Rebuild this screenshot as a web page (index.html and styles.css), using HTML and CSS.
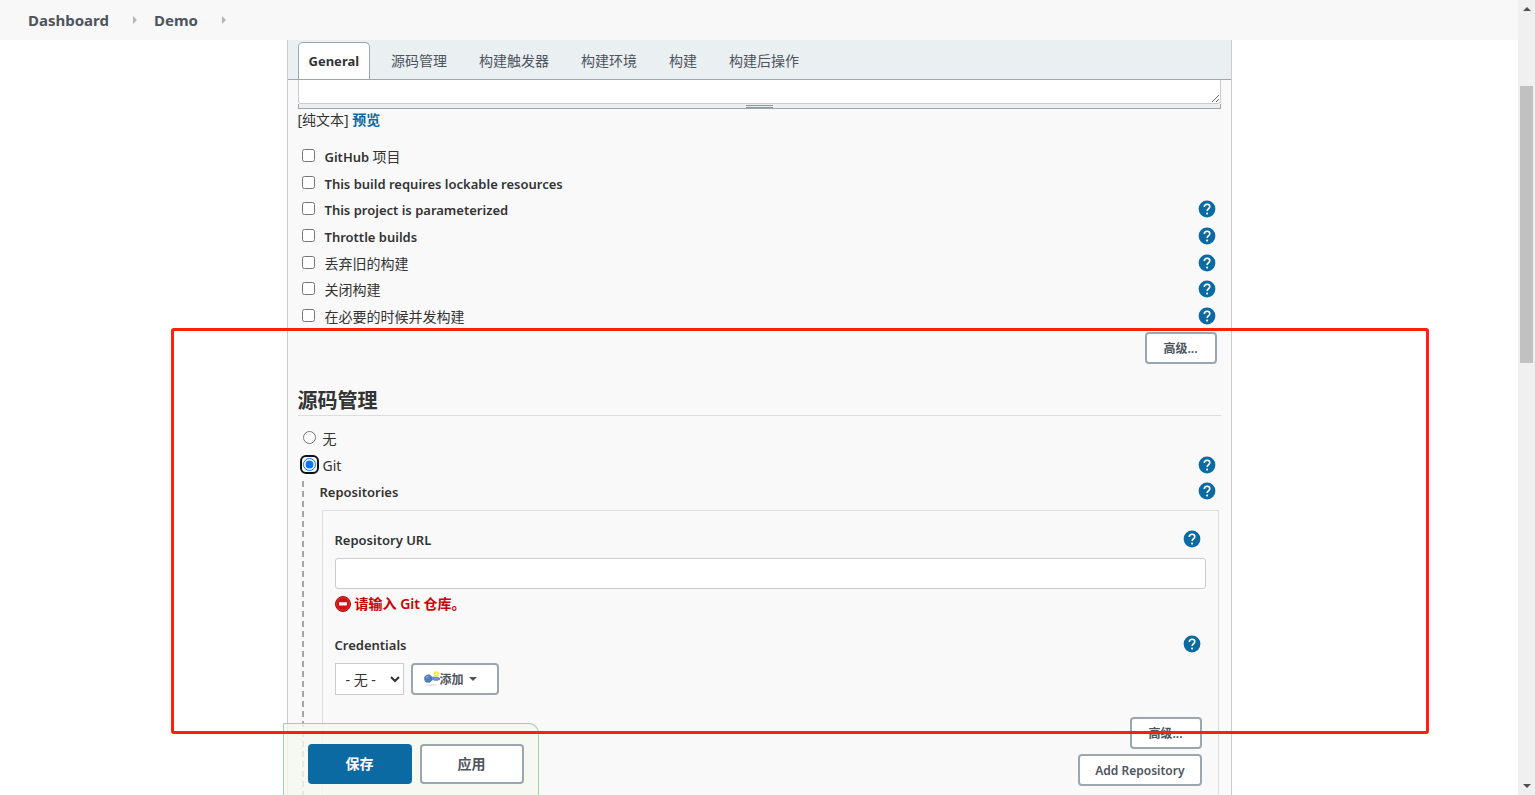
FILE: index.html
```html
<!DOCTYPE html>
<html lang="zh-CN">
    <head>
        <meta charset="utf-8">
        <title>Demo Config [Jenkins]</title>
        <link rel="stylesheet" href="styles.css">
    </head>

    <body>
        <svg class="sprite" aria-hidden="true">
            <symbol id="help" viewBox="0 0 18 18">
                <circle cx="9" cy="9" r="8.4" fill="#0b6aa2"/>
                <path d="M6.3 7C6.3 5.2 7.5 4.2 9.1 4.2s2.7 1 2.7 2.5c0 1.8-2.7 2-2.7 4.4" fill="none" stroke="#fff" stroke-width="1.6"/>
                <rect x="8.2" y="12.6" width="1.8" height="1.8" fill="#fff"/>
            </symbol>
        </svg>

        <div class="page">
            <nav class="breadcrumbs">
                <a href="#">Dashboard</a>
                <span class="arrow"></span>
                <a href="#">Demo</a>
                <span class="arrow"></span>
            </nav>

            <main class="panel">
                <div class="tabs">
                    <a class="tab active" href="#general">General</a>
                    <a class="tab" href="#scm">源码管理</a>
                    <a class="tab" href="#triggers">构建触发器</a>
                    <a class="tab" href="#env">构建环境</a>
                    <a class="tab" href="#build">构建</a>
                    <a class="tab" href="#post">构建后操作</a>
                </div>

                <form class="config">
                    <textarea class="description" aria-label="描述"></textarea>
                    <div class="handle"><span class="grip"></span></div>
                    <div class="preview">[纯文本] <a href="#">预览</a></div>

                    <div class="options">
                        <div class="row"><input type="checkbox" id="github"><label for="github">GitHub <span class="cn">项目</span></label></div>
                        <div class="row"><input type="checkbox" id="lock"><label for="lock">This build requires lockable resources</label></div>
                        <div class="row"><input type="checkbox" id="param"><label for="param">This project is parameterized</label><a class="help" href="#" aria-label="Help"><svg><use href="#help"/></svg></a></div>
                        <div class="row"><input type="checkbox" id="throttle"><label for="throttle">Throttle builds</label><a class="help" href="#" aria-label="Help"><svg><use href="#help"/></svg></a></div>
                        <div class="row"><input type="checkbox" id="discard"><label for="discard" class="cn">丢弃旧的构建</label><a class="help" href="#" aria-label="Help"><svg><use href="#help"/></svg></a></div>
                        <div class="row"><input type="checkbox" id="disable"><label for="disable" class="cn">关闭构建</label><a class="help" href="#" aria-label="Help"><svg><use href="#help"/></svg></a></div>
                        <div class="row"><input type="checkbox" id="concurrent"><label for="concurrent" class="cn">在必要的时候并发构建</label><a class="help" href="#" aria-label="Help"><svg><use href="#help"/></svg></a></div>
                    </div>
                    <div class="right"><button type="button" class="btn">高级...</button></div>

                    <h2 id="scm">源码管理</h2>
                    <div class="row"><span class="radio"><input type="radio" name="scm" id="none"></span><label for="none" class="cn">无</label></div>
                    <div class="row"><span class="radio focused"><input type="radio" name="scm" id="git" checked></span><label for="git" class="cn">Git</label><a class="help" href="#" aria-label="Help"><svg><use href="#help"/></svg></a></div>

                    <div class="nested">
                        <div class="row"><span class="name">Repositories</span><a class="help" href="#" aria-label="Help"><svg><use href="#help"/></svg></a></div>
                        <div class="repo">
                            <div class="row"><label for="url">Repository URL</label><a class="help" href="#" aria-label="Help"><svg><use href="#help"/></svg></a></div>
                            <input type="text" id="url" class="url">
                            <div class="error">
                                <svg class="error-icon" viewBox="0 0 16 16">
                                    <circle cx="8" cy="8" r="7.5" fill="#d40f0f" stroke="#9d1111"/>
                                    <circle cx="8" cy="8" r="6.5" fill="none" stroke="#e84a4a" stroke-width=".6"/>
                                    <rect x="4" y="6.2" width="8" height="3.2" rx=".4" fill="#fff"/>
                                </svg>
                                请输入 Git 仓库。
                            </div>
                            <div class="row"><label for="cred">Credentials</label><a class="help" href="#" aria-label="Help"><svg><use href="#help"/></svg></a></div>
                            <div class="credentials">
                                <select id="cred"><option>- 无 -</option></select>
                                <button type="button" class="btn add">
                                    <svg class="key" viewBox="0 0 16 16">
                                        <ellipse cx="7.5" cy="14" rx="6" ry="1" fill="#e6e6e6"/>
                                        <path d="M6 6.2h8l1.5 1v1.6H14l-1 1-1-1-1 1-1-1H6z" fill="#6b9ad2" stroke="#3d6aa5" stroke-width=".7"/>
                                        <path d="M2 4.5 5 3.6l2.5 2v4L5.5 11.5 2 11 .6 9V6z" fill="#4f7fbd" stroke="#34619b" stroke-width=".5"/>
                                        <path d="M2 6.5l2.5-1.3" stroke="#9cc0ea"/>
                                        <circle cx="12.3" cy="3" r="2" fill="#fffbc0" stroke="#f7e93c" stroke-width="1.5"/>
                                    </svg>添加<span class="caret"></span>
                                </button>
                            </div>
                            <div class="repo-buttons">
                                <button type="button" class="btn">高级...</button>
                                <button type="button" class="btn">Add Repository</button>
                            </div>
                        </div>
                    </div>
                </form>

                <div class="bottom-bar">
                    <button type="button" class="save">保存</button>
                    <button type="button" class="apply">应用</button>
                </div>
            </main>

            <div class="highlight"></div>
        </div>

        <div class="scrollbar">
            <span class="up"></span>
            <div class="track"><div class="thumb"></div></div>
            <span class="down"></span>
        </div>
    </body>
</html>
```

FILE: styles.css
```css
* {
    box-sizing: border-box;
}

body {
    margin: 0;
    display: flex;
    height: 100vh;
    overflow: hidden;
    background: #fff;
    color: #333;
    font-family: "Noto Sans", "Noto Sans CJK SC", sans-serif;
    font-size: 14px;
    line-height: 20px;
}

a {
    color: #0b6aa2;
    text-decoration: none;
}

button, input, select, textarea {
    margin: 0;
    font-family: inherit;
}

.sprite {
    position: absolute;
    width: 0;
    height: 0;
}

.page {
    position: relative;
    flex: 1;
    display: flex;
    flex-direction: column;
    overflow: hidden;
}

/* breadcrumbs */
.breadcrumbs {
    flex: none;
    display: flex;
    align-items: center;
    height: 40px;
    padding-left: 28px;
    background: #f8f8f8;
}

.breadcrumbs a {
    color: #4d545d;
    font-weight: 700;
    font-size: 15px;
}

.arrow {
    margin: 0 17px 0 24px;
    border: 4px solid transparent;
    border-left-color: #b5b5b5;
    border-right: 0;
}

/* config panel */
.panel {
    position: relative;
    flex: 1;
    width: 100%;
    max-width: 945px;
    min-height: 0;
    margin: 0 auto;
    border: solid #ccc;
    border-width: 0 1px;
    background: #f9f9f9;
}

.tabs {
    display: flex;
    align-items: flex-end;
    gap: 10px;
    height: 40px;
    padding: 0 10px;
    border-bottom: 1px solid #9aa7b0;
    background: #eaeff2;
}

.tab {
    height: 37px;
    padding: 0 10px;
    border: 1px solid transparent;
    border-bottom: 0;
    color: #4d545d;
    line-height: 36px;
}

.tab.active {
    border-color: #9aa7b0;
    border-radius: 5px 5px 0 0;
    background: #fff;
    color: #333;
    font-weight: 700;
    font-size: 13px;
}

.config {
    padding: 0 10px;
}

.description {
    display: block;
    width: 100%;
    height: 24px;
    border: 1px solid #ccc;
    border-top: 0;
    border-radius: 0 0 3px 3px;
    resize: vertical;
}

.handle {
    height: 5px;
    padding-top: 1px;
    border: 1px solid #9aa7b0;
    border-top: 0;
    background: #eaeff2;
}

.grip {
    display: block;
    width: 27px;
    height: 3px;
    margin: 0 auto;
    border: solid #8d959b;
    border-width: 1px 0;
}

.preview {
    height: 35px;
    line-height: 22px;
}

.preview a {
    font-weight: 600;
}

.row {
    display: flex;
    align-items: center;
    height: 27px;
}

.row label, .name {
    font-weight: 600;
    font-size: 13px;
}

.row .cn {
    font-weight: 400;
    font-size: 14px;
}

/* seven rows share the height */
.options {
    display: grid;
    grid-auto-rows: 1fr;
    height: 186px;
}

.options .row {
    height: auto;
}

.options input {
    margin: 0 10px 3px 4px;
}

.radio {
    margin: 0 4px 3px 2px;
    padding: 1px;
    border: 2px solid transparent;
    border-radius: 6px;
}

.radio input {
    display: block;
}

.focused {
    border-color: #101010;
}

.help {
    height: 18px;
    margin: 0 5px 2px auto;
}

.help svg {
    display: block;
    width: 18px;
    height: 18px;
}

.right {
    display: flex;
    justify-content: flex-end;
    margin-top: 2px;
    padding-right: 4px;
}

.btn {
    min-width: 72px;
    height: 32px;
    padding: 0 15px;
    border: 2px solid #9aa7b0;
    border-radius: 4px;
    background: #fff;
    color: #4d545d;
    font-weight: 600;
    font-size: 12px;
}

h2 {
    margin: 23px 0 9px;
    border-bottom: 1px solid #ddd;
    font-size: 20px;
    line-height: 28px;
}

/* git settings, with the dashed line down the left */
.nested {
    margin-left: 4px;
    padding: 0 2px 0 18px;
    background: repeating-linear-gradient(#a6a6a6 0 6px, transparent 6px 10px) 0 2px / 2px 100% no-repeat;
}

.nested .row {
    padding-bottom: 2px;
}

.nested .help {
    margin-right: 3px;
}

.repo {
    height: 300px;
    margin: 4px 0 0 2px;
    padding: 16px 12px;
    border: 1px solid #ddd;
}

.repo .help {
    margin-right: 5px;
}

.url {
    display: block;
    width: 100%;
    height: 31px;
    margin-top: 4px;
    border: 1px solid #ccc;
    border-radius: 3px;
}

.error {
    display: flex;
    align-items: center;
    gap: 4px;
    height: 30px;
    margin-bottom: 13px;
    color: #c00;
    font-weight: 600;
    font-size: 14px;
}

.error-icon {
    width: 16px;
    height: 16px;
}

.credentials {
    display: flex;
    gap: 7px;
    margin-top: 4px;
}

select {
    width: 69px;
    height: 32px;
    padding: 0 0 0 6px;
    border: 1px solid #ccc;
    border-radius: 0;
    background: #fff;
    color: #333;
    font-size: 14px;
}

.add {
    display: flex;
    align-items: center;
    padding: 0 20px 0 11px;
}

.key {
    width: 16px;
    height: 16px;
}

.caret {
    margin-left: 5px;
    border: 4px solid transparent;
    border-top-color: #4d545d;
    border-bottom: 0;
}

.repo-buttons {
    display: flex;
    flex-direction: column;
    align-items: flex-end;
    gap: 5px;
    margin-top: 22px;
    padding-right: 4px;
}

.bottom-bar {
    position: absolute;
    left: -5px;
    bottom: 0;
    display: flex;
    gap: 8px;
    padding: 20px 14px 11px 24px;
    border: 1px solid #a8cbb8;
    border-bottom: 0;
    border-top-right-radius: 10px;
    background: rgba(245, 249, 239, .8);
}

.save, .apply {
    width: 104px;
    height: 40px;
    padding: 0 0 2px;
    border: 2px solid #9aa7b0;
    border-radius: 4px;
    background: #fff;
    color: #4d545d;
    font-weight: 600;
    font-size: 14px;
}

.save {
    border-color: #0b6aa2;
    background: #0b6aa2;
    color: #fff;
}

/* red frame round the source code section */
.highlight {
    position: absolute;
    top: 328px;
    right: 89px;
    left: 171px;
    height: 406px;
    border: 3px solid #ff1e10;
    border-radius: 3px;
    pointer-events: none;
}

/* scrollbar */
.scrollbar {
    flex: none;
    display: flex;
    flex-direction: column;
    align-items: center;
    width: 17px;
    padding: 7px 0;
    background: #f0f0f0;
}

.up, .down {
    border: 4px solid transparent;
    border-top: 0;
    border-bottom-color: #505050;
}

.down {
    border-top: 4px solid #505050;
    border-bottom: 0;
}

.track {
    flex: 1;
    padding-top: 75px;
}

.thumb {
    width: 13px;
    height: 277px;
    background: #c1c1c1;
}
```
